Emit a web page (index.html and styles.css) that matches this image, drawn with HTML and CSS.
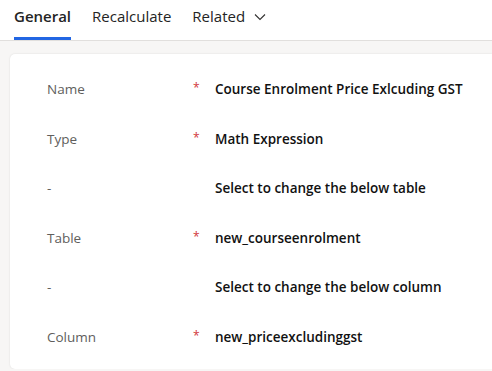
FILE: index.html
```
<!DOCTYPE html>
<html lang="en">
    <head>
        <meta charset="utf-8">
        <title>Rollup Column - General</title>
        <link rel="stylesheet" href="styles.css">
    </head>
    <body>
        <div class="tabs">
            <div class="tab active">General</div>
            <div class="tab">Recalculate</div>
            <div class="tab">Related
                <svg class="chevron" width="12" height="8" viewBox="0 0 12 8"><path d="M1 1.5 L6 6.5 L11 1.5" fill="none" stroke="#323130" stroke-width="1.1"/></svg>
            </div>
        </div>
        <div class="content">
            <div class="card">
                <div class="row">
                    <div class="label">Name</div>
                    <div class="req">*</div>
                    <div class="value">Course Enrolment Price Exlcuding GST</div>
                </div>
                <div class="row">
                    <div class="label">Type</div>
                    <div class="req">*</div>
                    <div class="value">Math Expression</div>
                </div>
                <div class="row">
                    <div class="label">-</div>
                    <div class="req"></div>
                    <div class="value">Select to change the below table</div>
                </div>
                <div class="row">
                    <div class="label">Table</div>
                    <div class="req">*</div>
                    <div class="value">new_courseenrolment</div>
                </div>
                <div class="row">
                    <div class="label">-</div>
                    <div class="req"></div>
                    <div class="value">Select to change the below column</div>
                </div>
                <div class="row">
                    <div class="label">Column</div>
                    <div class="req">*</div>
                    <div class="value">new_priceexcludinggst</div>
                </div>
            </div>
        </div>
    </body>
</html>
```
FILE: styles.css
```
body {
    margin: 0;
    font-family: "Open Sans", "Noto Sans", sans-serif;
    color: #323130;
    background-color: #f7f6f5;
    overflow: hidden;
}
.tabs {
    display: flex;
    height: 41px;
    padding-left: 14px;
    gap: 21px;
    background-color: #fff;
    border-bottom: 1px solid #e1dfdd;
    box-sizing: border-box;
}
.tab {
    display: flex;
    align-items: center;
    gap: 9px;
    height: 40px;
    box-sizing: border-box;
    padding-bottom: 5px;
    font-size: 15px;
    color: #242424;
    border-bottom: 3px solid transparent;
}
.tab.active {
    font-weight: 600;
    border-bottom-color: #2266e3;
}
.chevron {
    margin-top: 2px;
}
.content {
    padding: 13px 0 0 10px;
}
.card {
    background-color: #fff;
    border-radius: 5px 0 0 5px;
    box-shadow: 0 0 2px rgba(0, 0, 0, 0.12);
    height: 315px;
    padding-top: 26px;
    box-sizing: border-box;
    overflow: hidden;
}
.row {
    display: flex;
    align-items: flex-start;
    height: 49.6px;
    font-size: 13.5px;
}
.label {
    width: 146px;
    padding-left: 37px;
    color: #605e5c;
}
.req {
    width: 22px;
    color: #d13438;
    font-size: 12px;
    line-height: 16px;
}
.value {
    font-weight: 600;
    color: #111;
}
```
